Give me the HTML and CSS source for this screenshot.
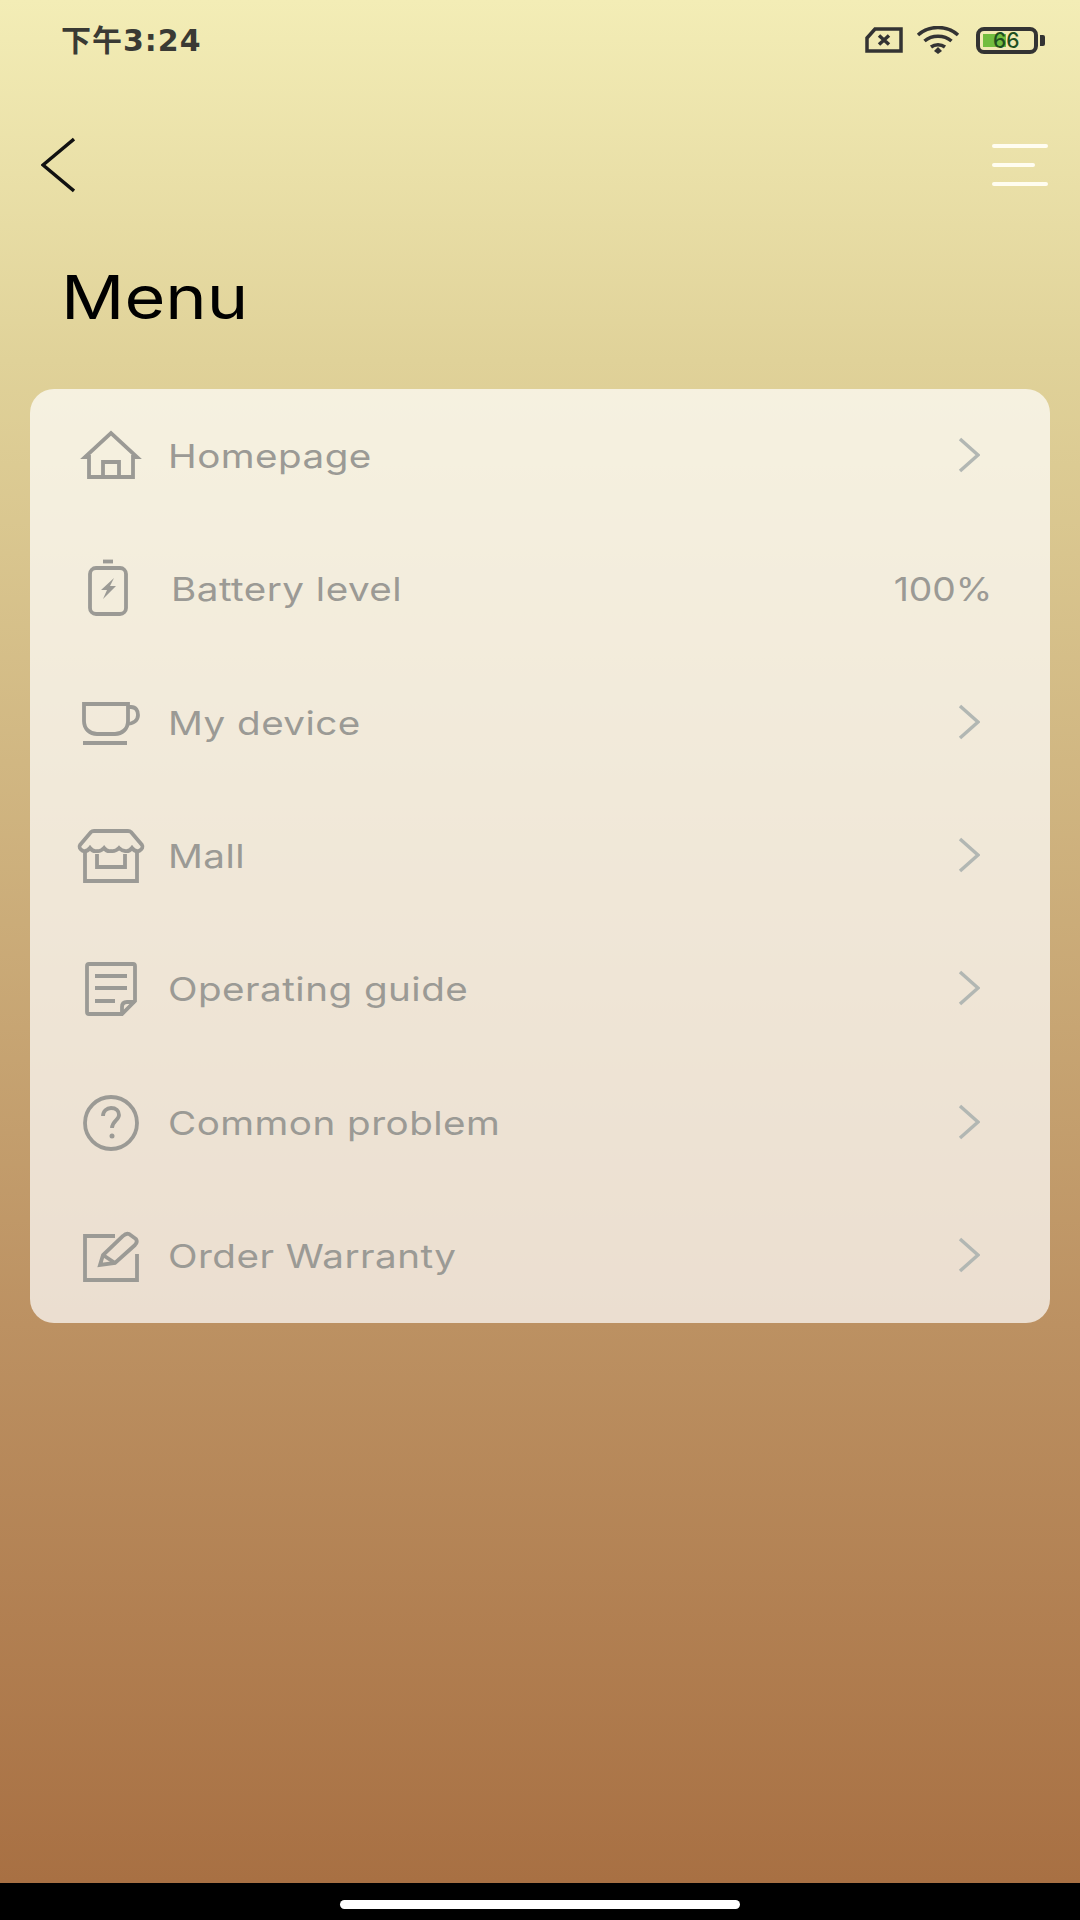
FILE: index.html
```html
<!DOCTYPE html>
<html lang="en">
<head>
    <meta charset="UTF-8">
    <meta name="viewport" content="width=device-width, initial-scale=1.0">
    <title>Menu</title>
    <link rel="stylesheet" href="styles.css">
</head>
<body>
    <div class="page">
        <div class="status-bar">
            <span class="time">下午3:24</span>
            <div class="status-icons">
                <svg class="sim" width="38" height="26" viewBox="0 0 38 26">
                    <path d="M10 2 H36 V24 H2 V11 Z"/>
                    <path d="M14 8.5 L24 17.5 M24 8.5 L14 17.5"/>
                </svg>
                <svg class="wifi" width="44" height="28" viewBox="0 0 44 28">
                    <path d="M2 9 C13 -1 31 -1 42 9"/>
                    <path d="M8.5 15 C16 8.5 28 8.5 35.5 15"/>
                    <path d="M15 21 C19 18 25 18 29 21"/>
                    <path class="wifi-dot" d="M22 21 L26 25 L22 28 L18 25 Z"/>
                </svg>
                <div class="phone-battery">
                    <div class="phone-battery-fill"></div>
                    <span class="phone-battery-text">66</span>
                </div>
                <div class="phone-battery-nub"></div>
            </div>
        </div>

        <div class="nav">
            <svg class="back" width="34" height="56" viewBox="0 0 34 56">
                <path d="M33 2 L2 28 L33 54"/>
            </svg>
            <div class="burger">
                <div class="burger-line"></div>
                <div class="burger-line short"></div>
                <div class="burger-line"></div>
            </div>
        </div>

        <h1 class="title">Menu</h1>

        <div class="card">
            <div class="row">
                <svg class="row-icon" viewBox="-3 0 70 64">
                    <path d="M10 33 H6 L32 9 L58 33 H54 V53 H10 Z"/>
                    <path d="M24 53 V38 H40 V53"/>
                </svg>
                <span class="row-label">Homepage</span>
                <svg class="chevron" viewBox="0 0 22 36"><path d="M2 2 L20 18 L2 34"/></svg>
            </div>
            <div class="row">
                <svg class="row-icon" viewBox="-3 0 70 64">
                    <rect x="11" y="11" width="36" height="46" rx="6"/>
                    <path d="M24 4.5 H34"/>
                    <path class="solid" d="M35 21 L22 33 H28 L24 42 L37 29 H31 Z"/>
                </svg>
                <span class="row-label shifted">Battery level</span>
                <span class="row-value">100%</span>
            </div>
            <div class="row">
                <svg class="row-icon" viewBox="-3 0 70 64">
                    <path d="M5 13 H49 V30 C49 38 43 43 36 43 H18 C11 43 5 38 5 30 Z"/>
                    <path d="M49 16 H52 C57 16 59 20 59 24 C59 29 55 33 47 33"/>
                    <path d="M4 52 H48"/>
                </svg>
                <span class="row-label">My device</span>
                <svg class="chevron" viewBox="0 0 22 36"><path d="M2 2 L20 18 L2 34"/></svg>
            </div>
            <div class="row">
                <svg class="row-icon" viewBox="-3 0 70 64">
                    <path d="M1 21 L12 8 Q13 7 15 7 H49 Q51 7 52 8 L63 21 Q65 24 60 27 Q56 28 53 24 Q50 28 46 27 Q43 27 40 24 Q36 28 32 27 Q28 28 25 24 Q21 28 18 27 Q14 28 11 24 Q8 28 4 27 Q-1 24 1 21 Z"/>
                    <path d="M6 28 V57 H58 V28"/>
                    <path d="M18 30 V43 H46 V30"/>
                </svg>
                <span class="row-label">Mall</span>
                <svg class="chevron" viewBox="0 0 22 36"><path d="M2 2 L20 18 L2 34"/></svg>
            </div>
            <div class="row">
                <svg class="row-icon" viewBox="-3 0 70 64">
                    <path d="M8 9 Q8 7 10 7 H54 Q56 7 56 9 V44 L43 57 H10 Q8 57 8 55 Z"/>
                    <path d="M16 19 H48 M16 31 H48 M16 44 H36"/>
                    <path d="M43 57 V50 Q43 45 48 45 H56"/>
                </svg>
                <span class="row-label">Operating guide</span>
                <svg class="chevron" viewBox="0 0 22 36"><path d="M2 2 L20 18 L2 34"/></svg>
            </div>
            <div class="row">
                <svg class="row-icon" viewBox="-3 0 70 64">
                    <circle cx="32" cy="32" r="26"/>
                    <path d="M24 25 C24 20 28 17 32 17 C37 17 40 20 40 24 C40 29 33 30 33 37"/>
                    <circle class="solid" cx="33" cy="45" r="2.5"/>
                </svg>
                <span class="row-label">Common problem</span>
                <svg class="chevron" viewBox="0 0 22 36"><path d="M2 2 L20 18 L2 34"/></svg>
            </div>
            <div class="row">
                <svg class="row-icon" viewBox="-3 0 70 64">
                    <path d="M36 12 H6 V56 H58 V30"/>
                    <path d="M21 41 L24 31 L44 12 Q47 9 50 10 L57 15 Q59 18 56 21 L36 39 Z"/>
                    <path d="M24 31 L36 39"/>
                </svg>
                <span class="row-label">Order Warranty</span>
                <svg class="chevron" viewBox="0 0 22 36"><path d="M2 2 L20 18 L2 34"/></svg>
            </div>
        </div>

        <div class="home-bar">
            <div class="home-pill"></div>
        </div>
    </div>
</body>
</html>
```

FILE: styles.css
```css
body {
    margin: 0;
    font-family: Inter, "Noto Sans CJK SC", sans-serif;
}

.page {
    width: 1080px;
    height: 1920px;
    display: flex;
    flex-direction: column;
    overflow: hidden;
    background: linear-gradient(180deg, #f3edb6 0%, #e0d299 18.75%, #bc9162 69%, #a87043 98%);
}

.status-bar {
    height: 80px;
    display: flex;
    align-items: center;
    justify-content: space-between;
    padding: 0 35px 0 61px;
}

.time {
    font-family: "DejaVu Sans", "Noto Sans CJK SC", sans-serif;
    font-size: 30px;
    font-weight: 700;
    line-height: 34px;
    letter-spacing: 1px;
    margin-top: 2px;
    color: #3a3a34;
}

.status-icons {
    display: flex;
    align-items: center;
}

.status-icons svg {
    fill: none;
    stroke: #333;
    stroke-width: 3.5;
}

.sim {
    margin-right: 13px;
}

.wifi {
    margin-right: 16px;
}

.status-icons .wifi-dot {
    fill: #333;
    stroke: none;
}

.phone-battery {
    position: relative;
    width: 62px;
    height: 27px;
    box-sizing: border-box;
    border: 4px solid #333;
    border-radius: 8px;
}

.phone-battery-fill {
    position: absolute;
    left: 3px;
    top: 3px;
    bottom: 3px;
    width: 23px;
    background: #72bd3f;
}

.phone-battery-text {
    position: absolute;
    left: 13px;
    top: -3px;
    font-size: 21px;
    font-weight: 500;
    line-height: 25px;
    color: #1f4f1f;
}

.phone-battery-nub {
    width: 5px;
    height: 11px;
    margin-left: 2px;
    background: #333;
    border-radius: 0 2px 2px 0;
}

.nav {
    height: 80px;
    margin-top: 45px;
    display: flex;
    align-items: center;
    justify-content: space-between;
    padding: 0 32px 0 41px;
}

.back {
    fill: none;
    stroke: #111;
    stroke-width: 3.5;
}

.burger {
    width: 56px;
    display: flex;
    flex-direction: column;
    gap: 15px;
}

.burger-line {
    height: 4px;
    background: #fffdf0;
    border-radius: 2px;
}

.burger-line.short {
    width: 43px;
}

.title {
    margin: 57px 0 57px 61px;
    font-size: 60px;
    line-height: 70px;
    font-weight: 400;
    color: #000;
    transform: scaleX(1.17);
    transform-origin: left center;
}

.card {
    margin: 0 30px;
    height: 934px;
    background: rgba(255, 255, 255, 0.7);
    border-radius: 24px;
    display: flex;
    flex-direction: column;
}

.row {
    flex: 1;
    display: flex;
    align-items: center;
    padding: 0 70px 0 46px;
}

.row-icon {
    width: 70px;
    height: 64px;
    margin-right: 22px;
    fill: none;
    stroke: #9b9a95;
    stroke-width: 3.8;
    overflow: visible;
}

.row-icon .solid {
    fill: #9b9a95;
    stroke: none;
}

/* the original face is wider than anything installed, so stretch Inter */
.row-label {
    flex: 1;
    font-size: 33px;
    letter-spacing: 0.4px;
    color: #9b9a95;
    transform: scaleX(1.17);
    transform-origin: left center;
}

.row-label.shifted {
    margin-left: 3px;
}

.row-value {
    margin-right: -12px;
    font-size: 33px;
    color: #9b9a95;
    transform: scaleX(1.13);
    transform-origin: right center;
}

.chevron {
    width: 22px;
    height: 36px;
    margin-bottom: 2px;
    fill: none;
    stroke: #b2b7b3;
    stroke-width: 3.5;
}

.home-bar {
    margin-top: auto;
    height: 37px;
    background: #000;
    display: flex;
    align-items: center;
    justify-content: center;
}

.home-pill {
    width: 400px;
    height: 9px;
    margin-top: 5px;
    background: #fff;
    border-radius: 5px;
}
```
